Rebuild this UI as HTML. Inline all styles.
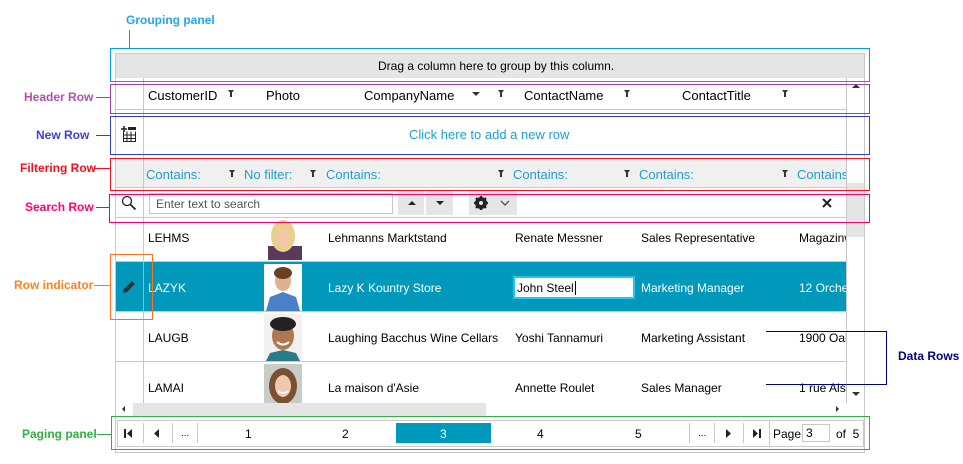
<!DOCTYPE html>
<html><head><meta charset="utf-8"><style>
*{margin:0;padding:0;box-sizing:border-box}
body{width:963px;height:464px;background:#fff;font-family:"Liberation Sans",sans-serif;font-size:12px;color:#000;position:relative;overflow:hidden}
.a{position:absolute}
.t{position:absolute;white-space:nowrap}
.lbl{position:absolute;font-weight:bold;font-size:12px;white-space:nowrap}
.f{position:absolute;width:0;height:0;border-left:3px solid transparent;border-right:3px solid transparent;border-top:4px solid #333}
.f:after{content:"";position:absolute;left:-1px;top:-1px;width:2px;height:4px;background:#333}
.cb{color:#1fa0c8;font-size:13px}
</style></head><body>
<!-- grid frame -->
<div class="a" style="left:115px;top:53px;width:750px;height:400px;border:1px solid #c8c8c8"></div>
<div class="a" style="left:116px;top:54px;width:748px;height:24px;background:#e5e5e5"></div>
<div class="t" style="left:378px;top:59px">Drag a column here to group by this column.</div>
<!-- indicator col line -->
<div class="a" style="left:143px;top:78px;width:1px;height:325px;background:#c8c8c8"></div>
<!-- vertical scrollbar -->
<div class="a" style="left:846px;top:78px;width:1px;height:325px;background:#c8c8c8"></div>
<div class="a" style="left:847px;top:183px;width:17px;height:54px;background:#e5e5e5"></div>
<div class="a" style="left:852px;top:84px;border-left:4px solid transparent;border-right:4px solid transparent;border-bottom:4px solid #333"></div>
<div class="a" style="left:852px;top:392px;border-left:4px solid transparent;border-right:4px solid transparent;border-top:4px solid #333"></div>
<!-- header row -->
<div class="t" style="left:148px;top:88px;font-size:13px">CustomerID</div><div class="f" style="left:228px;top:90px"></div>
<div class="t" style="left:266px;top:88px;font-size:13px">Photo</div>
<div class="t" style="left:364px;top:88px;font-size:13px">CompanyName</div>
<div class="a" style="left:472px;top:92px;border-left:4px solid transparent;border-right:4px solid transparent;border-top:4px solid #333"></div>
<div class="f" style="left:498px;top:90px"></div>
<div class="t" style="left:524px;top:88px;font-size:13px">ContactName</div><div class="f" style="left:624px;top:90px"></div>
<div class="t" style="left:682px;top:88px;font-size:13px">ContactTitle</div><div class="f" style="left:782px;top:90px"></div>
<div class="a" style="left:116px;top:109px;width:730px;height:1px;background:#c8c8c8"></div>
<!-- new row -->
<svg class="a" style="left:121px;top:126px" width="16" height="16" viewBox="0 0 16 16"><path d="M3 0v6M0 3h6" stroke="#222" stroke-width="1.5"/><rect x="7" y="1" width="8" height="3" fill="#222"/><path d="M2.5 5.5v10h12v-10M2.5 9h12M2.5 12.5h12M6 5.5v10M10 5.5v10" stroke="#222" fill="none"/></svg>
<div class="t cb" style="left:409px;top:127px">Click here to add a new row</div>
<!-- filter row -->
<div class="a" style="left:116px;top:158px;width:730px;height:29px;background:#f0f0f0"></div>
<div class="a" style="left:143px;top:158px;width:1px;height:29px;background:#c8c8c8"></div>
<div class="a" style="left:116px;top:187px;width:730px;height:1px;background:#c8c8c8"></div>
<div class="t cb" style="left:146px;top:167px">Contains:</div><div class="f" style="left:229px;top:170px"></div>
<div class="t cb" style="left:244px;top:167px">No filter:</div><div class="f" style="left:310px;top:170px"></div>
<div class="t cb" style="left:326px;top:167px">Contains:</div><div class="f" style="left:498px;top:170px"></div>
<div class="t cb" style="left:513px;top:167px">Contains:</div><div class="f" style="left:624px;top:170px"></div>
<div class="t cb" style="left:639px;top:167px">Contains:</div><div class="f" style="left:782px;top:170px"></div>
<div class="t cb" style="left:797px;top:167px;width:49px;overflow:hidden">Contains</div>
<!-- search row -->
<svg class="a" style="left:121px;top:195px" width="16" height="16" viewBox="0 0 16 16"><circle cx="6" cy="6" r="4.5" stroke="#222" stroke-width="1.3" fill="none"/><path d="M9.5 9.5l5 5" stroke="#222" stroke-width="1.8"/></svg>
<div class="a" style="left:149px;top:193px;width:244px;height:21px;border:1px solid #c8c8c8"></div>
<div class="t" style="left:156px;top:197px;color:#555">Enter text to search</div>
<div class="a" style="left:398px;top:191px;width:26px;height:24px;background:#e5e5e5"></div>
<div class="a" style="left:426px;top:191px;width:27px;height:24px;background:#e5e5e5"></div>
<div class="a" style="left:408px;top:201px;border-left:4px solid transparent;border-right:4px solid transparent;border-bottom:4px solid #222"></div>
<div class="a" style="left:436px;top:201px;border-left:4px solid transparent;border-right:4px solid transparent;border-top:4px solid #222"></div>
<div class="a" style="left:469px;top:191px;width:48px;height:24px;background:#e5e5e5"></div>
<svg class="a" style="left:473px;top:195px" width="40" height="16" viewBox="0 0 40 16"><circle cx="8" cy="8" r="4.5" fill="none" stroke="#222" stroke-width="3"/><path d="M8 1v14M1 8h14M3 3l10 10M13 3L3 13" stroke="#222" stroke-width="2.2"/><circle cx="8" cy="8" r="2" fill="#e5e5e5"/><path d="M28 6l4 4 4-4" stroke="#444" fill="none" stroke-width="1.2"/></svg>
<svg class="a" style="left:822px;top:198px" width="10" height="10"><path d="M1 1l8 8M9 1l-8 8" stroke="#222" stroke-width="2"/></svg>
<div class="a" style="left:116px;top:217px;width:730px;height:1px;background:#c8c8c8"></div>
<!-- rows -->
<div class="a" style="left:116px;top:261px;width:730px;height:1px;background:#c8c8c8"></div>
<div class="a" style="left:116px;top:262px;width:730px;height:49px;background:#0099bb"></div>
<div class="a" style="left:143px;top:262px;width:1px;height:49px;background:#6cc"></div>
<div class="a" style="left:116px;top:311px;width:730px;height:1px;background:#c8c8c8"></div>
<div class="a" style="left:116px;top:361px;width:730px;height:1px;background:#c8c8c8"></div>
<svg class="a" style="left:122px;top:280px" width="14" height="14" viewBox="0 0 14 14"><path d="M1 13l1-4 8-8 3 3-8 8z" fill="#333"/></svg>
<!-- row1 -->
<div class="t" style="left:148px;top:231px">LEHMS</div>
<svg class="a" style="left:264px;top:218px" width="38" height="42"><rect width="38" height="42" fill="#fff"/><rect x="4" y="28" width="34" height="14" fill="#5a3a5a"/><ellipse cx="19" cy="18" rx="12" ry="16" fill="#e8cf8a"/><ellipse cx="19" cy="20" rx="7" ry="9" fill="#f0c8a8"/></svg>
<div class="t" style="left:328px;top:231px">Lehmanns Marktstand</div>
<div class="t" style="left:515px;top:231px">Renate Messner</div>
<div class="t" style="left:641px;top:231px">Sales Representative</div>
<div class="t" style="left:799px;top:231px;width:47px;overflow:hidden">Magazinweg</div>
<!-- row2 -->
<div class="t" style="left:148px;top:281px;color:#fff">LAZYK</div>
<svg class="a" style="left:264px;top:264px" width="38" height="47"><rect width="38" height="47" fill="#fff"/><path d="M2 47l4-14 13-5 13 5 4 14z" fill="#4a80c8"/><ellipse cx="19" cy="17" rx="8" ry="10" fill="#e0b090"/><ellipse cx="19" cy="9" rx="9" ry="6" fill="#6a4020"/></svg>
<div class="t" style="left:328px;top:281px;color:#fff">Lazy K Kountry Store</div>
<div class="a" style="left:513px;top:276px;width:122px;height:23px;background:#fff;border:2px solid #1ec8f0"></div>
<div class="t" style="left:517px;top:281px">John Steel<span style="border-left:1px solid #000;margin-left:1px"></span></div>
<div class="t" style="left:641px;top:281px;color:#fff">Marketing Manager</div>
<div class="t" style="left:799px;top:281px;color:#fff;width:47px;overflow:hidden">12 Orchestra</div>
<!-- row3 -->
<div class="t" style="left:148px;top:331px">LAUGB</div>
<svg class="a" style="left:264px;top:314px" width="38" height="47"><rect width="38" height="47" fill="#f4f0f0"/><path d="M2 47l4-8 13-3 13 3 4 8z" fill="#2a7a8a"/><ellipse cx="19" cy="22" rx="11" ry="14" fill="#b07850"/><ellipse cx="19" cy="10" rx="13" ry="7" fill="#222"/><path d="M13 28q6 5 12 0" stroke="#fff" stroke-width="2" fill="none"/></svg>
<div class="t" style="left:328px;top:331px">Laughing Bacchus Wine Cellars</div>
<div class="t" style="left:515px;top:331px">Yoshi Tannamuri</div>
<div class="t" style="left:641px;top:331px">Marketing Assistant</div>
<div class="t" style="left:799px;top:331px;width:47px;overflow:hidden">1900 Oak St.</div>
<!-- row4 -->
<div class="t" style="left:148px;top:381px">LAMAI</div>
<svg class="a" style="left:264px;top:364px" width="38" height="39"><rect width="38" height="39" fill="#c8ccc8"/><ellipse cx="19" cy="22" rx="14" ry="18" fill="#7a5030"/><ellipse cx="19" cy="22" rx="8" ry="11" fill="#f0c8b0"/><path d="M14 27q5 4 10 0" stroke="#fff" stroke-width="1.5" fill="none"/></svg>
<div class="t" style="left:328px;top:381px">La maison d'Asie</div>
<div class="t" style="left:515px;top:381px">Annette Roulet</div>
<div class="t" style="left:641px;top:381px">Sales Manager</div>
<div class="t" style="left:799px;top:381px;width:47px;overflow:hidden">1 rue Alsace</div>
<!-- h scrollbar -->
<div class="a" style="left:133px;top:403px;width:353px;height:13px;background:#e5e5e5"></div>
<div class="a" style="left:122px;top:406px;border-top:3px solid transparent;border-bottom:3px solid transparent;border-right:3px solid #333"></div>
<div class="a" style="left:836px;top:406px;border-top:3px solid transparent;border-bottom:3px solid transparent;border-left:3px solid #333"></div>
<!-- paging -->
<div class="a" style="left:117px;top:420px;width:747px;height:27px;border:1px solid #c8c8c8"></div>
<div class="a" style="left:143px;top:423px;width:1px;height:20px;background:#c8c8c8"></div>
<div class="a" style="left:172px;top:423px;width:1px;height:20px;background:#c8c8c8"></div>
<div class="a" style="left:197px;top:423px;width:1px;height:20px;background:#c8c8c8"></div>
<div class="a" style="left:689px;top:423px;width:1px;height:20px;background:#c8c8c8"></div>
<div class="a" style="left:714px;top:423px;width:1px;height:20px;background:#c8c8c8"></div>
<div class="a" style="left:743px;top:423px;width:1px;height:20px;background:#c8c8c8"></div>
<div class="a" style="left:769px;top:421px;width:1px;height:25px;background:#c8c8c8"></div>
<svg class="a" style="left:124px;top:429px" width="10" height="9"><rect x="0" y="0" width="2" height="9" fill="#222"/><path d="M8 0v9L3 4.5z" fill="#222"/></svg>
<svg class="a" style="left:154px;top:429px" width="6" height="9"><path d="M5 0v9L0 4.5z" fill="#222"/></svg>
<div class="t" style="left:181px;top:428px;font-size:10px">...</div>
<div class="t" style="left:245px;top:427px">1</div>
<div class="t" style="left:342px;top:427px">2</div>
<div class="a" style="left:396px;top:423px;width:95px;height:20px;background:#0099bb"></div>
<div class="t" style="left:440px;top:427px;color:#fff">3</div>
<div class="t" style="left:537px;top:427px">4</div>
<div class="t" style="left:635px;top:427px">5</div>
<div class="t" style="left:698px;top:428px;font-size:10px">...</div>
<svg class="a" style="left:726px;top:429px" width="6" height="9"><path d="M0 0v9L5 4.5z" fill="#222"/></svg>
<svg class="a" style="left:753px;top:429px" width="10" height="9"><path d="M0 0v9L5 4.5z" fill="#222"/><rect x="6" y="0" width="2" height="9" fill="#222"/></svg>
<div class="t" style="left:773px;top:427px">Page</div>
<div class="a" style="left:802px;top:424px;width:28px;height:18px;border:1px solid #c8c8c8"></div>
<div class="t" style="left:806px;top:426px">3</div>
<div class="t" style="left:836px;top:427px">of&nbsp; 5</div>
<!-- annotation boxes -->
<div class="a" style="left:110px;top:48px;width:760px;height:34px;border:1px solid #00a0e8"></div>
<div class="a" style="left:110px;top:84px;width:760px;height:30px;border:1px solid #a040a8"></div>
<div class="a" style="left:110px;top:116px;width:760px;height:39px;border:1px solid #3040c8"></div>
<div class="a" style="left:110px;top:158px;width:781px;height:33px;border:1px solid #f01020;width:760px"></div>
<div class="a" style="left:109px;top:194px;width:782px;height:29px;border:1px solid #f00070;width:761px"></div>
<div class="a" style="left:110px;top:254px;width:43px;height:66px;border:1px solid #ff7020"></div>
<div class="a" style="left:111px;top:416px;width:759px;height:34px;border:1px solid #30b040"></div>
<!-- labels -->
<div class="lbl" style="left:126px;top:13px;color:#20a8e8">Grouping panel</div>
<div class="a" style="left:129px;top:30px;width:1px;height:18px;background:#00a0e8"></div>
<div class="lbl" style="left:24px;top:90px;color:#b050b0">Header Row</div>
<div class="a" style="left:96px;top:97px;width:14px;height:1px;background:#a040a8"></div>
<div class="lbl" style="left:36px;top:128px;color:#4040d0">New Row</div>
<div class="a" style="left:96px;top:135px;width:14px;height:1px;background:#3040c8"></div>
<div class="lbl" style="left:20px;top:161px;color:#f01020">Filtering Row</div>
<div class="a" style="left:95px;top:168px;width:15px;height:1px;background:#f01020"></div>
<div class="lbl" style="left:25px;top:200px;color:#ff0070">Search Row</div>
<div class="a" style="left:96px;top:207px;width:14px;height:1px;background:#f00070"></div>
<div class="lbl" style="left:14px;top:278px;color:#ff8020">Row indicator</div>
<div class="a" style="left:94px;top:285px;width:16px;height:1px;background:#ff7020"></div>
<div class="lbl" style="left:22px;top:427px;color:#30b040">Paging panel</div>
<div class="a" style="left:97px;top:434px;width:14px;height:1px;background:#30b040"></div>
<div class="lbl" style="left:898px;top:349px;color:#000080">Data Rows</div>
<div class="a" style="left:766px;top:331px;width:121px;height:54px;border:1px solid #000080;border-left:none"></div>
</body></html>
